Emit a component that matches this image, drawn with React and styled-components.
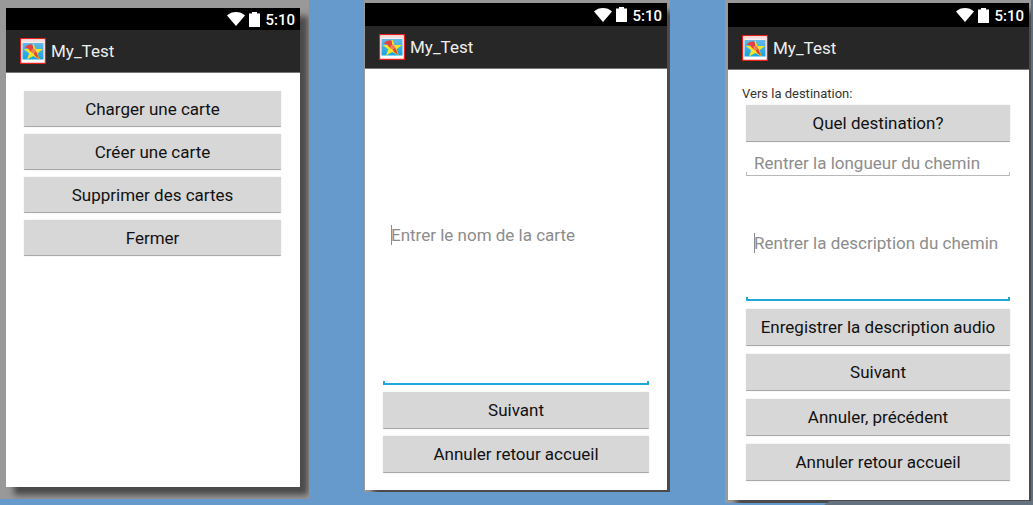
import React from "react";
import styled, { createGlobalStyle, css } from "styled-components";

const GlobalStyle = createGlobalStyle`
  *, *::before, *::after { box-sizing: border-box; }
  body {
    margin: 0;
    background: #6699cc;
    font-family: Roboto, "Liberation Sans", sans-serif;
  }
`;

const Gallery = styled.main`
  position: relative;
  display: grid;
  grid-template-columns: 309fr 306fr 308fr;
  column-gap: 55px;
  min-height: 100vh;
`;

const Corner = styled.svg`
  position: absolute;
  right: 0;
  bottom: 0;
  width: 209px;
  height: 4px;
`;

const Frame = styled.section`
  display: flex;
  min-width: 0;
  overflow: hidden;
  background: #999999;
  padding: ${(p) => p.$pad};
  margin-bottom: ${(p) => p.$bottom}px;
  ${(p) => p.$edge && css`border-right: 2px solid ${p.$edge};`}
`;

const Phone = styled.div`
  flex: 1;
  min-width: 0;
  display: flex;
  flex-direction: column;
  background: #ffffff;
  box-shadow: 8px 8px 6px #4a4a4a;
`;

const StatusBar = styled.div`
  display: flex;
  align-items: center;
  justify-content: flex-end;
  height: ${(p) => p.$height}px;
  padding-right: 5px;
  background: #000000;
  color: #ffffff;
`;

const WifiIcon = styled.svg`
  width: 18px;
  height: 14px;
  margin-right: 4px;
`;

const BatteryIcon = styled.svg`
  width: 11px;
  height: 15px;
  margin-right: 5px;
`;

const Time = styled.time`
  padding-top: 2px;
  font-size: 15px;
  font-weight: 500;
  line-height: 20px;
`;

const AppBar = styled.header`
  display: flex;
  align-items: center;
  gap: 5px;
  height: 43px;
  padding-left: 14px;
  background: #272727;
  border-bottom: 1px solid #777777;
`;

const AppIcon = styled.svg`
  width: 26px;
  height: 26px;
`;

const Title = styled.h1`
  margin: 0;
  font-size: 17px;
  line-height: 20px;
  font-weight: 400;
  color: #eeeeee;
`;

const Form = styled.form`
  flex: 1;
  display: flex;
  flex-direction: column;
  gap: ${(p) => p.$gap}px;
  padding: ${(p) => p.$pad};
`;

const LabelledGroup = styled.div`
  display: flex;
  flex-direction: column;
  gap: 3px;
`;

const Button = styled.button`
  flex: none;
  height: ${(p) => p.$height || 36}px;
  padding: 0 8px;
  border: 0;
  border-bottom: 1px solid #a8a8a8;
  border-radius: 1px;
  box-shadow: 0 0 1px #bbbbbb;
  background: #d7d7d7;
  color: #111111;
  font: 400 17px/20px Roboto, "Liberation Sans", sans-serif;
  white-space: nowrap;
`;

const Label = styled.label`
  margin-left: -4px;
  font-size: 13px;
  line-height: 16px;
  color: #333333;
`;

const caret = css`linear-gradient(#8c8c8c, #8c8c8c) 8px 50% / 1px 20px no-repeat,`;

const Field = styled.input`
  flex: ${(p) => (p.$grow ? "1" : "none")};
  min-width: 0;
  height: 26px;
  padding: 0 8px;
  border: 0;
  border-radius: 0;
  outline: none;
  color: #222222;
  font: 400 17px/20px Roboto, "Liberation Sans", sans-serif;
  background:
    ${(p) => p.$active && caret}
    linear-gradient(${(p) => p.$line}, ${(p) => p.$line}) 0 100% / 100% ${(p) => p.$weight}px no-repeat,
    linear-gradient(${(p) => p.$line}, ${(p) => p.$line}) 0 100% / ${(p) => p.$weight}px 4px no-repeat,
    linear-gradient(${(p) => p.$line}, ${(p) => p.$line}) 100% 100% / ${(p) => p.$weight}px 4px no-repeat;
  &::placeholder { color: #8c8c8c; opacity: 1; }
`;

function Screen({ pad, bottom, status, edge, children }) {
  return (
    <Frame $pad={pad} $bottom={bottom} $edge={edge}>
      <Phone>
        <StatusBar $height={status}>
          <WifiIcon viewBox="0 0 18 14" aria-hidden="true">
            <path d="M0 3.400C2.500 1.200 5.600 0 9 0s6.500 1.200 9 3.400L9 14z" fill="#fff" />
          </WifiIcon>
          <BatteryIcon viewBox="0 0 11 15" aria-hidden="true">
            <path d="M3 0h5v1.500h3V15H0V1.500h3z" fill="#fff" />
          </BatteryIcon>
          <Time>5:10</Time>
        </StatusBar>
        <AppBar>
          <AppIcon viewBox="0 0 26 26" aria-hidden="true">
            <defs>
              <linearGradient id="sky" x1="0" y1="0" x2="0" y2="1">
                <stop offset="0" stopColor="#66b8e6" />
                <stop offset="1" stopColor="#12a5e2" />
              </linearGradient>
            </defs>
            <rect x="0.500" y="0.500" width="25" height="25" rx="1" fill="#fff" stroke="#e8201c" strokeWidth="1.400" />
            <rect x="1.500" y="1.500" width="23" height="3" fill="#f3dfe0" />
            <rect x="2.500" y="5" width="21" height="16.500" fill="url(#sky)" />
            <path d="M13.300 5.200l2.300 5.800h7.400l-5.500 4.200 2.200 6.300-6.400-3.600-6.300 3.600 2.200-6.300-5.600-4.200h7.300z" fill="#f3e529" />
            <path d="M4.500 9.500l3-2.500 4-.8 1.300 1.300.4 3 1.800 2-2 2.500-3-2-2-2.800z" fill="#e8403f" />
            <path d="M13 14l3-1 3.200 8-4.200-3z" fill="#e5432c" />
            <circle cx="13.500" cy="13" r="2.300" fill="#f0805c" />
          </AppIcon>
          <Title>My_Test</Title>
        </AppBar>
        {children}
      </Phone>
    </Frame>
  );
}

export default function App() {
  return (
    <>
      <GlobalStyle />
      <Gallery>
        <Corner viewBox="0 0 209 4" preserveAspectRatio="none" aria-hidden="true">
          <path d="M0 4L6 0H209V4z" fill="#65727f" />
        </Corner>
        <Screen pad="8px 9px 12px 6px" bottom={6} status={22}>
          <Form $gap={7} $pad="18px 19px 18px 18px">
            <Button type="button">Charger une carte</Button>
            <Button type="button">Créer une carte</Button>
            <Button type="button">Supprimer des cartes</Button>
            <Button type="button">Fermer</Button>
          </Form>
        </Screen>
        <Screen pad="3px 3px 2px 1px" bottom={13} status={23}>
          <Form $gap={7} $pad="16px 18px 17px">
            <Field $grow $active $line="#1fa8d8" $weight={2} aria-label="Nom de la carte" placeholder="Entrer le nom de la carte" />
            <Button $height={37} type="button">Suivant</Button>
            <Button $height={37} type="button">Annuler retour accueil</Button>
          </Form>
        </Screen>
        <Screen pad="3px 2px 3px 3px" bottom={2} status={24} edge="#5d6f80">
          <Form $gap={8} $pad="16px 19px 19px 18px">
            <LabelledGroup>
              <Label htmlFor="destination">Vers la destination:</Label>
              <Button $height={37} id="destination" type="button">Quel destination?</Button>
            </LabelledGroup>
            <Field $line="#b8b8b8" $weight={1} aria-label="Longueur du chemin" placeholder="Rentrer la longueur du chemin" />
            <Field $grow $active $line="#1fa8d8" $weight={2} aria-label="Description du chemin" placeholder="Rentrer la description du chemin" />
            <Button $height={37} type="button">Enregistrer la description audio</Button>
            <Button $height={37} type="button">Suivant</Button>
            <Button $height={37} type="button">Annuler, précédent</Button>
            <Button $height={37} type="button">Annuler retour accueil</Button>
          </Form>
        </Screen>
      </Gallery>
    </>
  );
}
